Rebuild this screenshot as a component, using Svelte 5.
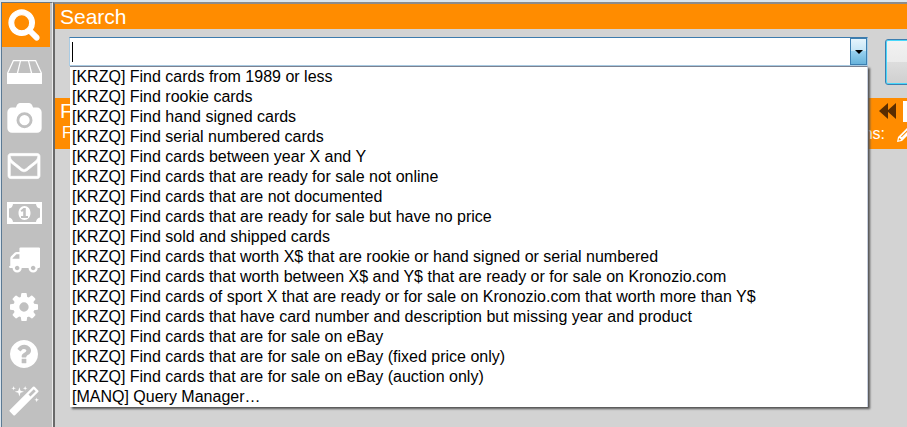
<script>

    const icons = {
        camera: {
            box: "-64 0 1920 1792",
            path: "M896 672q119 0 203.5 84.5t84.5 203.5-84.5 203.5-203.5 84.5-203.5-84.5-84.5-203.5 84.5-203.5 203.5-84.5zm704-416q106 0 181 75t75 181v896q0 106-75 181t-181 75h-1408q-106 0-181-75t-75-181v-896q0-106 75-181t181-75h224l51-136q19-49 69.5-84.5t103.5-35.5h512q53 0 103.5 35.5t69.5 84.5l51 136h224zm-704 1152q185 0 316.5-131.5t131.5-316.5-131.5-316.5-316.5-131.5-316.5 131.5-131.5 316.5 131.5 316.5 316.5 131.5z"
        },
        search: {
            box: "64 128 1664 1664",
            bold: 70,
            path: "M1216 832q0-185-131.5-316.5t-316.5-131.5-316.5 131.5-131.5 316.5 131.5 316.5 316.5 131.5 316.5-131.5 131.5-316.5zm512 832q0 52-38 90t-90 38q-54 0-90-38l-343-342q-179 124-399 124-143 0-273.5-55.5t-225-150-150-225-55.5-273.5 55.5-273.5 150-225 225-150 273.5-55.5 273.5 55.5 225 150 150 225 55.5 273.5q0 220-124 399l343 343q37 37 37 90z"
        },
        mail: {
            box: "0 256 1792 1408",
            bold: 40,
            path: "M1664 1504v-768q-32 36-69 66-268 206-426 338-51 43-83 67t-86.5 48.5-102.5 24.5h-2q-48 0-102.5-24.5t-86.5-48.5-83-67q-158-132-426-338-37-30-69-66v768q0 13 9.5 22.5t22.5 9.5h1472q13 0 22.5-9.5t9.5-22.5zm0-1051v-24.5l-.5-13-3-12.5-5.5-9-9-7.5-14-2.5h-1472q-13 0-22.5 9.5t-9.5 22.5q0 168 147 284 193 152 401 317 6 5 35 29.5t46 37.5 44.5 31.5 50.5 27.5 43 9h2q20 0 43-9t50.5-27.5 44.5-31.5 46-37.5 35-29.5q208-165 401-317 54-43 100.5-115.5t46.5-131.5zm128-37v1088q0 66-47 113t-113 47h-1472q-66 0-113-47t-47-113v-1088q0-66 47-113t113-47h1472q66 0 113 47t47 113z"
        },
        basket: {
            box: "0 0 35 24",
            path: "M6 0H29L35 13V24H0V13ZM6.8 1.200L1.400 13H9.800L12.800 1.200ZM14 1.200L11.200 13H23.800L21 1.200ZM22.200 1.200L25.200 13H33.600L28.200 1.200Z"
        },
        money: {
            box: "0 0 35 22",
            path: "M0 0H35V22H0ZM6 2Q5.500 6 2 6.500V15.500Q5.500 16 6 20H29Q29.500 16 33 15.500V6.500Q29.500 6 29 2ZM17.500 4C21 4 23.500 7 23.500 11S21 18 17.500 18S11.500 15 11.500 11S14 4 17.500 4ZM16.500 6L13.500 8.500L14.800 10L16.200 9V14H14V16H21V14H18.800V6Z"
        },
        truck: {
            box: "0 256 1792 1408",
            path: "M640 1408q0-52-38-90t-90-38-90 38-38 90 38 90 90 38 90-38 38-90zm-384-512h384v-256h-158q-13 0-22 9l-195 195q-9 9-9 22v30zm1280 512q0-52-38-90t-90-38-90 38-38 90 38 90 90 38 90-38 38-90zm256-1088v1024q0 15-4 26.5t-13.5 18.5-16.5 11.5-23.5 6-22.5 2-25.5 0-22.5-.5q0 106-75 181t-181 75-181-75-75-181h-384q0 106-75 181t-181 75-181-75-75-181h-64q-3 0-22.5.5t-25.5 0-22.5-2-23.5-6-16.5-11.5-13.5-18.5-4-26.5q0-26 19-45t45-19v-320q0-8-.5-35t0-38 2.5-34.5 6.5-37 14-30.5 22.5-30l198-198q19-19 50.5-32t58.5-13h160v-192q0-26 19-45t45-19h1024q26 0 45 19t19 45z"
        },
        cog: {
            box: "128 128 1536 1536",
            path: "M1152 896q0-106-75-181t-181-75-181 75-75 181 75 181 181 75 181-75 75-181zm512-109v222q0 12-8 23t-20 13l-185 28q-19 54-39 91 35 50 107 138 10 12 10 25t-9 23q-27 37-99 108t-94 71q-12 0-26-9l-138-108q-44 23-91 38-16 136-29 186-7 28-36 28h-222q-14 0-24.5-8.5t-11.5-21.5l-28-184q-49-16-90-37l-141 107q-10 9-25 9-14 0-25-11-126-114-165-168-7-10-7-23 0-12 8-23 15-21 51-66.5t54-70.5q-27-50-41-99l-183-27q-13-2-21-12.5t-8-23.5v-222q0-12 8-23t19-13l186-28q14-46 39-92-40-57-107-138-10-12-10-24 0-10 9-23 26-36 98.5-107.5t94.5-71.5q13 0 26 10l138 107q44-23 91-38 16-136 29-186 7-28 36-28h222q14 0 24.5 8.5t11.5 21.5l28 184q49 16 90 37l142-107q9-9 24-9 13 0 25 10 129 119 165 170 7 8 7 22 0 12-8 23-15 21-51 66.5t-54 70.5q26 50 41 98l183 28q13 2 21 12.5t8 23.5z"
        },
        help: {
            box: "128 128 1536 1536",
            path: "M1024 1376v-192q0-14-9-23t-23-9h-192q-14 0-23 9t-9 23v192q0 14 9 23t23 9h192q14 0 23-9t9-23zm256-672q0-88-55.5-163t-138.5-116-170-41q-243 0-371 213-15 24 8 42l132 100q7 6 19 6 16 0 25-12 53-68 86-92 34-24 86-24 48 0 85.5 26t37.5 59q0 38-20 61t-68 45q-63 28-115.5 86.5t-52.5 125.5v36q0 14 9 23t23 9h192q14 0 23-9t9-23q0-19 21.5-49.5t54.5-49.5q32-18 49-28.5t46-35 44.5-48 28-60.5 12.5-81zm384 192q0 209-103 385.5t-279.5 279.5-385.5 103-385.5-103-279.5-279.5-103-385.5 103-385.5 279.5-279.5 385.5-103 385.5 103 279.5 279.5 103 385.5z"
        },
        magic: {
            box: "64 0 1664 1664",
            path: "M1254 581l293-293-107-107-293 293zm447-293q0 27-18 45l-1286 1286q-18 18-45 18t-45-18l-198-198q-18-18-18-45t18-45l1286-1286q18-18 45-18t45 18l198 198q18 18 18 45zm-1351-190l98 30-98 30-30 98-30-98-98-30 98-30 30-98zm350 162l196 60-196 60-60 196-60-196-196-60 196-60 60-196zm930 478l98 30-98 30-30 98-30-98-98-30 98-30 30-98zm-640-640l98 30-98 30-30 98-30-98-98-30 98-30 30-98z"
        }
    };

    const tools = [
        { name: "Search", icon: "search", w: 30, h: 30 },
        { name: "Inventory", icon: "basket", w: 35, h: 24 },
        { name: "Photos", icon: "camera", w: 35, h: 32 },
        { name: "Mail", icon: "mail", w: 32, h: 26 },
        { name: "Sales", icon: "money", w: 35, h: 22 },
        { name: "Shipping", icon: "truck", w: 32, h: 26 },
        { name: "Settings", icon: "cog", w: 28, h: 28 },
        { name: "Help", icon: "help", w: 28, h: 28 },
        { name: "Wizard", icon: "magic", w: 30, h: 30 }
    ];

    const queries = [
        "[KRZQ] Find cards from 1989 or less",
        "[KRZQ] Find rookie cards",
        "[KRZQ] Find hand signed cards",
        "[KRZQ] Find serial numbered cards",
        "[KRZQ] Find cards between year X and Y",
        "[KRZQ] Find cards that are ready for sale not online",
        "[KRZQ] Find cards that are not documented",
        "[KRZQ] Find cards that are ready for sale but have no price",
        "[KRZQ] Find sold and shipped cards",
        "[KRZQ] Find cards that worth X$ that are rookie or hand signed or serial numbered",
        "[KRZQ] Find cards that worth between X$ and Y$ that are ready or for sale on Kronozio.com",
        "[KRZQ] Find cards of sport X that are ready or for sale on Kronozio.com that worth more than Y$",
        "[KRZQ] Find cards that have card number and description but missing year and product",
        "[KRZQ] Find cards that are for sale on eBay",
        "[KRZQ] Find cards that are for sale on eBay (fixed price only)",
        "[KRZQ] Find cards that are for sale on eBay (auction only)",
        "[MANQ] Query Manager…"
    ];

    let active = $state("Search");
    let query = $state("");
    let open = $state(true);
    let field;

    $effect(() => {
        field.focus();
    });

    function pick(text) {
        query = text;
        open = false;
        field.focus();
    }

</script>

<div class="window">

    <nav class="sidebar">
        {#each tools as tool}
            <button
                class="tool"
                class:active={active === tool.name}
                aria-label={tool.name}
                onclick={() => active = tool.name}
            >
                <svg width={tool.w} height={tool.h} viewBox={icons[tool.icon].box}>
                    <path
                        fill-rule={tool.icon === "basket" || tool.icon === "money" ? "evenodd" : "nonzero"}
                        stroke-width={icons[tool.icon].bold ?? 0}
                        d={icons[tool.icon].path}
                    />
                </svg>
            </button>
        {/each}
    </nav>

    <main>
        <h1>Search</h1>

        <div class="searchbar">
            <div class="combo">
                {#if query === ""}
                    <span class="caret"></span>
                {/if}
                <input
                    type="text"
                    aria-label="Search query"
                    bind:this={field}
                    bind:value={query}
                />
                <button class="arrow" aria-label="Show queries" onclick={() => open = !open}>
                    <svg width="8" height="4" viewBox="0 0 8 4"><path d="M0 0H8L4 4Z" /></svg>
                </button>

                {#if open}
                    <ul class="list">
                        {#each queries as text}
                            <li><button onclick={() => pick(text)}>{text}</button></li>
                        {/each}
                    </ul>
                {/if}
            </div>

            <button class="go" aria-label="Run search"></button>
        </div>

        <section class="results">
            <div class="left">
                <h2>F</h2>
                <span>F</span>
            </div>
            <div class="right">
                <div class="pager">
                    <button aria-label="First page">
                        <svg width="17" height="16" viewBox="0 0 17 16"><path fill="#5a2d00" d="M9 0V16L0 8ZM17 0V16L8 8Z" /></svg>
                    </button>
                    <input type="text" aria-label="Page" />
                </div>
                <div class="items">
                    <span>ns:</span>
                    <button aria-label="Edit">
                        <svg width="16" height="16" viewBox="0 0 16 16"><path fill="#fff" fill-rule="evenodd" d="M0 16L1 11L11 1Q12 0 13 1L15 3Q16 4 15 5L5 15ZM2 12.500L1.500 14.500L3.500 14L4 13.500L2.500 12ZM4 10.500L4.700 11.200L11.500 4.400L10.800 3.700Z" /></svg>
                    </button>
                </div>
            </div>
        </section>
    </main>

</div>

<style>

:global(body) {
    margin: 0;
    background: #d3d3d3;
}

.window {
    display: flex;
    box-sizing: border-box;
    min-height: 100vh;
    overflow: hidden;
    border-top: 2px solid #dce6ee;
    border-left: 1px solid #dce6ee;
    font-family: "Liberation Sans", Arial, sans-serif;
}

button {
    padding: 0;
    border: none;
    background: none;
    font: inherit;
    cursor: pointer;
}

svg {
    display: block;
    overflow: visible;
}

/* sidebar */

.sidebar {
    display: flex;
    flex-direction: column;
    gap: 3px;
    box-sizing: border-box;
    width: 52px;
    flex: none;
    padding-right: 2px;
    border-top: 1px solid #6b7780;
    border-left: 1px solid #5c7a94;
    border-right: 1px solid #ececec;
    background: #c0c0c0;
}

.tool {
    display: flex;
    align-items: center;
    justify-content: center;
    height: 44px;
    padding-right: 4px;
    fill: #fff;
    stroke: #fff;
}

.tool.active {
    background: #ff8c00;
}

/* main */

main {
    flex: 1;
    min-width: 0;
    border-top: 2px solid #8c8c8c;
    border-left: 2px solid #696969;
    background: #d3d3d3;
}

h1,
h2 {
    margin: 0;
    font-size: 21px;
    font-weight: normal;
    line-height: 25px;
    color: #fff;
}

h1 {
    padding-left: 5px;
    background: #ff8c00;
}

.searchbar {
    display: flex;
    align-items: flex-start;
    gap: 17px;
    height: 61px;
    padding: 8px 0 0 14px;
}

.combo {
    position: relative;
    display: flex;
    align-items: center;
    box-sizing: border-box;
    flex: 1;
    height: 29px;
    border: 1px solid #a9cbe3;
    border-top-color: #3d7bad;
    background: #fff;
}

.caret {
    width: 1px;
    height: 20px;
    margin-left: 2px;
    background: #000;
}

.combo input {
    flex: 1;
    min-width: 0;
    padding: 0 2px;
    border: none;
    outline: none;
    background: #fff;
    font: inherit;
    font-size: 16px;
    caret-color: transparent;
}

.arrow {
    display: flex;
    align-items: center;
    justify-content: center;
    align-self: stretch;
    width: 17px;
    border: 1px solid #3c7fb1;
    background: linear-gradient(#e5f4fc 0%, #c4e5f6 50%, #98d1ef 50%, #68b3db 100%);
}

.list {
    position: absolute;
    z-index: 1;
    top: 28px;
    left: 0;
    right: -1px;
    margin: 0;
    padding: 0;
    border-top: 1px solid #7c8291;
    border-right: 1px solid #c8d0e0;
    background: #fff;
    box-shadow: 2px 2px 2px #555;
    list-style: none;
}

.list button {
    display: block;
    width: 100%;
    padding-left: 2px;
    font-size: 16px;
    line-height: 20px;
    text-align: left;
    white-space: nowrap;
    color: #000;
}

.go {
    box-sizing: border-box;
    width: 80px;
    height: 46px;
    margin: 2px -58px 0 0;
    border: 1px solid #3c7fb1;
    border-radius: 3px;
    background: linear-gradient(#f2f2f2 0%, #ebebeb 50%, #dddddd 50%, #cfcfcf 100%);
    box-shadow: inset 0 0 0 1px #48d8fb;
}

/* results header */

.results {
    display: flex;
    justify-content: space-between;
    height: 51px;
    background: #ff8c00;
    color: #fff;
}

.left {
    padding-left: 5px;
}

.left span {
    padding-left: 2px;
}

.left span,
.items {
    font-size: 16px;
    line-height: 20px;
}

.pager,
.items {
    display: flex;
    justify-content: flex-end;
    gap: 7px;
}

.pager {
    align-items: center;
    height: 26px;
}

.pager input {
    box-sizing: border-box;
    width: 40px;
    height: 21px;
    margin-right: -36px;
    border: none;
    background: #fff;
}

.items {
    gap: 12px;
}

.items button {
    margin-right: -6px;
}

</style>
